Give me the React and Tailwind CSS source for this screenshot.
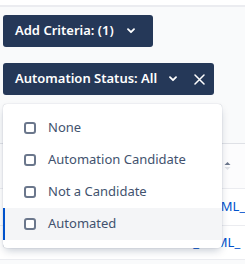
import React from "react";

const Chevron = () => (
  <svg width="8" height="6" viewBox="0 0 8 6" className="shrink-0">
    <path d="M1 1.2 L4 4.2 L7 1.2" fill="none" stroke="white" strokeWidth="1.8" strokeLinecap="round" strokeLinejoin="round" />
  </svg>
);

const Close = () => (
  <svg width="11" height="11" viewBox="0 0 11 11" className="shrink-0">
    <path d="M1 1 L10 10 M10 1 L1 10" fill="none" stroke="white" strokeWidth="1.5" strokeLinecap="round" />
  </svg>
);

const Box = () => (
  <span className="block w-[12px] h-[12px] rounded-[3px] border-2 border-[#6b778c] bg-white shrink-0" />
);

const options = ["None", "Automation Candidate", "Not a Candidate", "Automated"];

export default function App() {
  return (
    <div
      className="relative w-[245px] h-[264px] overflow-hidden bg-[#f9fafb]"
      style={{ fontFamily: '"Noto Sans", "Open Sans", sans-serif' }}
    >
      <div className="h-[5px] bg-white border-b-2 border-[#ebecf0] box-content" />
      <div className="px-[3px] pt-[8px] flex flex-col items-start gap-[16px]">
        <button className="h-[32px] w-[150px] rounded-[3px] bg-[#253858] text-white text-[13px] font-semibold flex items-center pl-[12px] gap-[13px] whitespace-nowrap">
          <span>Add Criteria: (1)</span>
          <Chevron />
        </button>
        <button className="h-[32px] w-[211px] rounded-[3px] bg-[#253858] text-white text-[13px] font-semibold flex items-center pl-[12px] whitespace-nowrap">
          <span>Automation Status: All</span>
          <span className="ml-[12px]"><Chevron /></span>
          <span className="ml-[17px]"><Close /></span>
        </button>
      </div>

      {/* table behind */}
      <div className="mt-[48px] border-t border-[#dfe1e6] bg-white">
        <div className="h-[45px] bg-[#fcfcfd] border-b border-[#ebecf0] flex items-center justify-end pr-[14px]">
          <svg width="7" height="8" viewBox="0 0 7 8">
            <path d="M0.5 3 L3.5 0 L6.5 3 Z" fill="#6b778c" />
            <path d="M0.5 5 L3.5 8 L6.5 5 Z" fill="#dfe1e6" />
          </svg>
        </div>
        <div className="h-[37px] border-b border-[#ebecf0] flex items-center text-[13px] text-[#0052cc]">
          <span className="ml-[177px] whitespace-nowrap">SEL_HTML_</span>
        </div>
        <div className="h-[34px] border-b border-[#ebecf0] flex items-center text-[13px] relative">
          <span className="absolute left-[3px] top-[9px] w-[12px] h-[12px] rounded-[2px] border border-[#6b778c]" />
          <span className="ml-[55px] w-[70px] text-[#0052cc] whitespace-nowrap">TCM-1354</span>
          <span className="ml-[22px] w-[25px] text-[#42526e]">..</span>
          <span className="text-[#0052cc] whitespace-nowrap">SEL_HTML_</span>
        </div>
      </div>

      {/* dropdown */}
      <div className="absolute left-[3px] top-[104px] w-[219px] py-[8px] bg-white rounded-[4px] shadow-[0_4px_8px_-2px_rgba(9,30,66,0.25),0_0_1px_rgba(9,30,66,0.31)]">
        {options.map((o, i) => (
          <div
            key={o}
            className={
              "h-[32px] flex items-center gap-[12px] pl-[19px] text-[13px] text-[#42526e] border-l-2 " +
              (i === 3 ? "bg-[#f4f5f7] border-[#0052cc]" : "border-transparent")
            }
          >
            <Box />
            <span>{o}</span>
          </div>
        ))}
      </div>
    </div>
  );
}
